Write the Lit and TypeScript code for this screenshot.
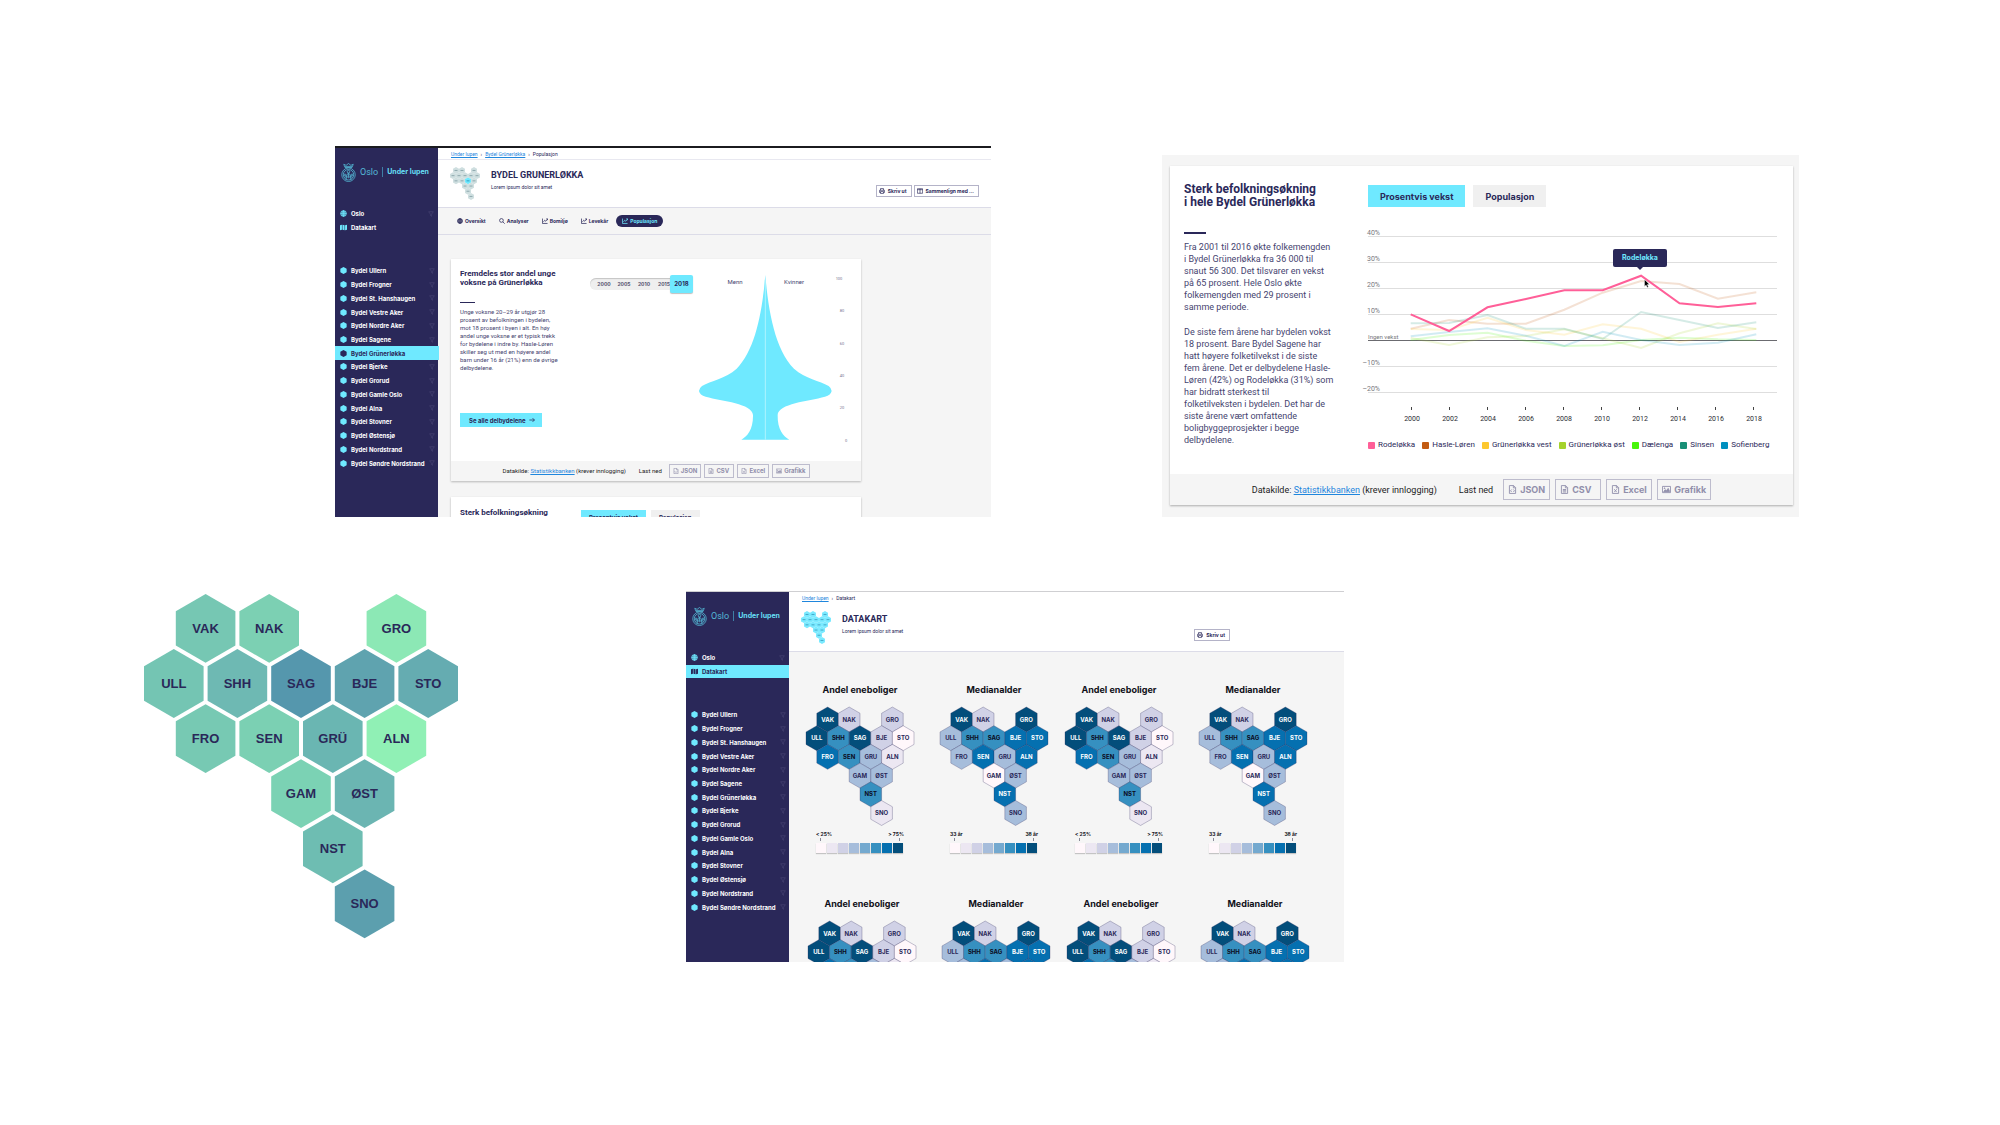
import { LitElement, html, css, svg, nothing } from "lit";
import { customElement, property } from "lit/decorators.js";
import { classMap } from "lit/directives/class-map.js";

/* ---------- shared styles ---------- */

const base = css`
  * {
    box-sizing: border-box;
    margin: 0;
    padding: 0;
  }
  :host {
    display: block;
    color: #2a2859;
    font-family: Roboto, "Liberation Sans", sans-serif;
  }
  button {
    border: 0;
    background: none;
    color: inherit;
    font: inherit;
    cursor: pointer;
    white-space: nowrap;
  }
  ul {
    list-style: none;
  }
  svg {
    display: block;
    flex: none;
  }
  .strong {
    font-family: Inter, "Liberation Sans", sans-serif;
    font-weight: 700;
  }
  .outline {
    display: flex;
    align-items: center;
    gap: 3px;
    height: 12px;
    padding: 0 4px 0 2px;
    border: 1px solid #b4b3c8;
    background: #fff;
    font-size: 5px;
  }
`;

/* ---------- icons ---------- */

const paths = {
  globe: svg`<circle cx="8" cy="8" r="6.6"/><path d="M1.4 8h13.2M8 1.4v13.2M8 1.4c-4.4 4-4.4 9.200 0 13.2M8 1.4c4.400 4 4.400 9.200 0 13.2M2.500 4.500h11M2.500 11.500h11"/>`,
  map: svg`<path fill="currentColor" stroke="none" d="M0 3l4.400-1.500v11.500L0 14.500zM5.600 1.500l4.800 1.500v11.500l-4.800-1.500zM11.600 3L16 1.500v11.500l-4.400 1.500z"/>`,
  search: svg`<circle cx="6.500" cy="6.500" r="5"/><path d="M10.200 10.200l5 5"/>`,
  chart: svg`<path d="M1.200 1.500v13h13.600M4 10l3.200-4 2.800 2.600 5-6M11.500 2.200h3.600v3.600"/>`,
  print: svg`<path d="M4 6V1.500h8V6M4 12H1.500V6h13v6H12M4 9.500h8v5H4z"/>`,
  columns: svg`<path d="M1 2h14v12H1zM8 2v12M1 4.500h14"/>`,
  filter: svg`<path d="M1.500 2h13L9.600 8.200v6L6.400 12V8.200z"/>`,
  arrow: svg`<path d="M1 8h13.500M9.500 3l5 5-5 5"/>`,
  json: svg`<path d="M2.500 1h7.500l3.500 3.500V15h-11zM9.500 1v4h4M6.500 8l-2 2.200 2 2.200M9.500 8l2 2.200-2 2.200"/>`,
  csv: svg`<path d="M2.500 1h7.500l3.500 3.500V15h-11zM9.500 1v4h4M5 8h6M5 10.200h6M5 12.400h6"/>`,
  excel: svg`<path d="M2.500 1h7.500l3.500 3.500V15h-11zM9.500 1v4h4M5.800 7.500l4.400 5.200M10.200 7.500l-4.400 5.200"/>`,
  image: svg`<path d="M.8 2.500h14.400v11H.8z"/><path fill="currentColor" d="M3 11.500l3-3 2 1.500 3-4 2.500 5.500z"/><circle cx="4.600" cy="5.800" r=".8" fill="currentColor"/>`,
  hexagon: svg`<path fill="currentColor" stroke="none" d="M8 0l7.200 3.800v8.400L8 16 .8 12.200V3.800z"/>`,
};
type IconName = keyof typeof paths;

const icon = (name: IconName, size: number, stroke = 1.8) => html`<svg
  width=${size} height=${size} viewBox="0 0 16 16" fill="none" stroke="currentColor"
  stroke-width=${stroke} aria-hidden="true">${paths[name]}</svg>`;

/* ---------- hexagon map ---------- */

const cells: [code: string, column: number, row: number][] = [
  ["VAK", 1, 0], ["NAK", 3, 0], ["GRO", 7, 0],
  ["ULL", 0, 1], ["SHH", 2, 1], ["SAG", 4, 1], ["BJE", 6, 1], ["STO", 8, 1],
  ["FRO", 1, 2], ["SEN", 3, 2], ["GRU", 5, 2], ["ALN", 7, 2],
  ["GAM", 4, 3], ["ØST", 6, 3],
  ["NST", 5, 4],
  ["SNO", 6, 5],
];

type Fill = { fill: string; text: string };

const hexMap = (o: {
  pitch: number;
  width: number;
  fills: Fill[];
  font?: number;
  family?: string;
  stroke?: string;
  labels?: Record<string, string>;
  title: string;
}) => {
  const r = o.width / Math.sqrt(3);
  const rowStep = (o.pitch * Math.sqrt(3)) / 2;
  const w = Math.ceil(o.pitch * 4 + o.width);
  const h = Math.ceil(rowStep * 5 + r * 2);
  return html`<svg width=${w} height=${h} viewBox="0 0 ${w} ${h}" role="img" aria-label=${o.title}>
    ${cells.map(([code, column, row], i) => {
      const x = o.width / 2 + (column * o.pitch) / 2;
      const y = r + row * rowStep;
      const a = o.width / 2;
      const points = [[0, -r], [a, -r / 2], [a, r / 2], [0, r], [-a, r / 2], [-a, -r / 2]]
        .map(([dx, dy]) => `${(x + dx).toFixed(2)},${(y + dy).toFixed(2)}`)
        .join(" ");
      const f = o.fills[i];
      return svg`<polygon points=${points} fill=${f.fill} stroke=${o.stroke ?? "none"} stroke-width="1"/>
        ${o.font
          ? svg`<text x=${x} y=${y + o.font * 0.36} text-anchor="middle" font-family=${o.family} font-weight="700"
              font-size=${o.font} fill=${f.text}>${o.labels?.[code] ?? code}</text>`
          : svg`<path d="M${x - 1.500} ${y}h3" stroke=${f.text} stroke-width="1"/>`}`;
    })}
  </svg>`;
};

const ramp = ["#fff7fb", "#ece7f2", "#d0d1e6", "#a6bddb", "#74a9cf", "#3690c0", "#0570b0", "#034e7b"];
const fromRamp = (steps: number[]): Fill[] =>
  steps.map((s) => ({ fill: ramp[s], text: s > 5 ? "#ffffff" : s === 5 ? "#0b0b20" : "#2a2859" }));

const eneboliger = fromRamp([7, 2, 2, 7, 5, 7, 2, 0, 6, 5, 3, 1, 3, 3, 5, 1]);
const medianalder = fromRamp([7, 2, 7, 3, 5, 5, 6, 6, 3, 6, 3, 6, 0, 3, 6, 3]);
const overview: Fill[] = [
  "#76c7b3", "#7cd0b3", "#8ce8b5", "#74c5b3", "#6eb9b3", "#5597ad", "#5fa3af", "#65acb1",
  "#77c9b3", "#7bd0b3", "#6ab6b2", "#90f0b5", "#7bd2b4", "#6bb5b2", "#6ebdb2", "#5c9fae",
].map((fill) => ({ fill, text: "#2a2859" }));

/* ---------- side navigation ---------- */

const districts = [
  "Ullern", "Frogner", "St. Hanshaugen", "Vestre Aker", "Nordre Aker", "Sagene", "Grünerløkka", "Bjerke",
  "Grorud", "Gamle Oslo", "Alna", "Stovner", "Østensjø", "Nordstrand", "Søndre Nordstrand",
].map((name) => `Bydel ${name}`);

@customElement("side-nav")
class SideNav extends LitElement {
  @property() current = "";

  static styles = [
    base,
    css`
      :host {
        flex: none;
        width: 103px;
        background: #2a2859;
        color: #fff;
      }
      .logo {
        display: flex;
        align-items: center;
        gap: 4px;
        height: 20px;
        margin: 14px 6px 25px;
        color: #54b9d6;
      }
      .city {
        font-size: 9px;
        line-height: 10px;
      }
      .product {
        padding-left: 4px;
        color: #66dff5;
        font-size: 7px;
        line-height: 10px;
        border-left: 1px solid #3f7fa6;
        white-space: nowrap;
      }
      .pages,
      .districts {
        display: grid;
        grid-auto-rows: 1fr;
      }
      .pages {
        height: 27px;
      }
      .districts {
        height: 206px;
        margin-top: 30px;
      }
      li {
        display: flex;
      }
      a {
        flex: 1;
        display: flex;
        align-items: center;
        gap: 4px;
        padding: 0 4px 0 5px;
        color: #fff;
        font-size: 6px;
        text-decoration: none;
        white-space: nowrap;
      }
      a .mark {
        color: #6fe9ff;
      }
      a .funnel {
        margin-left: auto;
        color: #4c4a78;
      }
      a.current {
        background: #6fe9ff;
        color: #2a2859;
      }
      a.current .mark {
        color: #2a2859;
      }
    `,
  ];

  private item(name: string, glyph: IconName, filter = true) {
    const current = name === this.current;
    return html`<li>
      <a href="#" class=${classMap({ strong: true, current })} aria-current=${current ? "page" : nothing}>
        <span class="mark">${icon(glyph, 7, 1.8)}</span>${name}
        ${filter && !current ? html`<span class="funnel">${icon("filter", 6, 1.5)}</span>` : nothing}
      </a>
    </li>`;
  }

  render() {
    return html`
      <div class="logo">
        <svg width="15" height="19" viewBox="0 0 30 38" fill="none" stroke="currentColor" stroke-width="1.600" aria-hidden="true">
          <path d="M8 9L5.500 2.500l4.700 2.200L15 1l4.800 3.700 4.700-2.200L22 9zM8 6.800h14"/>
          <circle cx="15" cy="23.500" r="13.500"/>
          <circle cx="15" cy="23.500" r="10.500"/>
          <circle cx="15" cy="17.500" r="2.600"/>
          <path d="M15 20v9M10 34l2-11 3-2.500 3 2.500 2 11M7 29l4-2.500 4 3 4-3 4 2.500"/>
          <circle cx="8" cy="24" r="2"/>
          <circle cx="22" cy="24" r="2"/>
        </svg>
        <span class="city">Oslo</span>
        <span class="product strong">Under lupen</span>
      </div>
      <nav aria-label="Sider">
        <ul class="pages">${this.item("Oslo", "globe")}${this.item("Datakart", "map", false)}</ul>
        <ul class="districts">${districts.map((d) => this.item(d, "hexagon"))}</ul>
      </nav>
    `;
  }
}

/* ---------- page header ---------- */

@customElement("page-header")
class PageHeader extends LitElement {
  @property() heading = "";
  @property({ attribute: false }) trail: string[] = [];
  @property({ attribute: false }) fills: Fill[] = [];
  @property({ type: Boolean, reflect: true }) compare = false;

  static styles = [
    base,
    css`
      :host {
        background: #fff;
        border-bottom: 1px solid #dcdce8;
      }
      .trail {
        display: flex;
        gap: 3px;
        height: 12px;
        padding-left: 13px;
        font-size: 5px;
        line-height: 12px;
      }
      :host([compare]) .trail {
        border-bottom: 1px solid #e8e8f0;
      }
      .trail a {
        color: #1f86dd;
      }
      .row {
        display: flex;
        gap: 11px;
        height: 47px;
        padding: 7px 12px 0;
      }
      :host(:not([compare])) .row {
        padding-right: 114px;
      }
      .titles {
        flex: 1;
        padding-top: 3px;
      }
      h1 {
        margin-bottom: 4px;
        font-size: 9px;
        line-height: 10px;
      }
      .titles p {
        font-size: 5px;
        line-height: 6px;
      }
      .actions {
        display: flex;
        align-items: flex-start;
        gap: 2px;
        padding-top: 18px;
      }
    `,
  ];

  render() {
    const last = this.trail.length - 1;
    return html`
      <nav class="trail" aria-label="Brødsmuler">
        ${this.trail.map((t, i) => (i === last ? html`<span>${t}</span>` : html`<a href="#">${t}</a><span>›</span>`))}
      </nav>
      <div class="row">
        ${hexMap({ pitch: 6, width: 6, fills: this.fills, title: this.heading })}
        <div class="titles">
          <h1>${this.heading}</h1>
          <p>Lorem ipsum dolor sit amet</p>
        </div>
        <div class="actions">
          <button class="outline strong">${icon("print", 6)}Skriv ut</button>
          ${this.compare
            ? html`<button class="outline strong">${icon("columns", 6)}Sammenlign med ...</button>`
            : nothing}
        </div>
      </div>
    `;
  }
}

/* ---------- source and download bar ---------- */

@customElement("download-bar")
class DownloadBar extends LitElement {
  @property({ type: Boolean, reflect: true }) compact = false;

  static styles = [
    base,
    css`
      :host {
        display: flex;
        align-items: center;
        justify-content: center;
        gap: 22px;
        height: 31px;
        background: #f5f5f5;
        color: #1c1c24;
        font-size: 9px;
        line-height: 12px;
        white-space: nowrap;
      }
      a {
        color: #1f86dd;
      }
      .files {
        display: flex;
        align-items: center;
        gap: 5px;
      }
      .files span {
        margin-right: 5px;
      }
      button {
        display: flex;
        align-items: center;
        gap: 3px;
        min-width: 46px;
        height: 21px;
        padding: 0 4px;
        border: 1px solid #bdbccd;
        color: #918fab;
      }
      :host([compact]) {
        gap: 13px;
        height: 20px;
        font-size: 6px;
        line-height: 8px;
      }
      :host([compact]) .files {
        gap: 3px;
      }
      :host([compact]) .files span {
        margin-right: 4px;
      }
      :host([compact]) button {
        gap: 2px;
        min-width: 30px;
        height: 14px;
        padding: 0 3px;
      }
    `,
  ];

  render() {
    const size = this.compact ? 6 : 9;
    const files: [string, IconName][] = [["JSON", "json"], ["CSV", "csv"], ["Excel", "excel"], ["Grafikk", "image"]];
    return html`
      <p>Datakilde: <a href="#">Statistikkbanken</a> (krever innlogging)</p>
      <div class="files">
        <span>Last ned</span>
        ${files.map(([name, glyph]) => html`<button class="strong">${icon(glyph, size, 1.600)}${name}</button>`)}
      </div>
    `;
  }
}

/* ---------- population card ---------- */

@customElement("population-card")
class PopulationCard extends LitElement {
  static styles = [
    base,
    css`
      :host {
        background: #fff;
        box-shadow: 0 1px 2px rgba(0, 0, 0, 0.25);
      }
      .body {
        display: flex;
        height: 202px;
        padding: 10px 0 0 9px;
      }
      .body svg {
        overflow: visible;
      }
      .text {
        width: 130px;
        flex: none;
      }
      h2 {
        font-size: 8px;
        line-height: 9px;
      }
      h2::after {
        content: "";
        display: block;
        width: 15px;
        height: 1px;
        margin: 15px 0 5px;
        background: #2a2859;
      }
      .text p {
        width: 100px;
        height: 92px;
        margin-right: 30px;
        font-size: 6px;
        line-height: 8px;
        color: #46446f;
      }
      .all {
        display: flex;
        align-items: center;
        gap: 3px;
        height: 14px;
        margin-top: 13px;
        padding: 0 7px 0 9px;
        background: #6fe9ff;
        font-size: 6px;
      }
      .years {
        display: grid;
        flex: none;
        width: 103px;
        height: 18px;
        margin: 6px 27px 0 0;
        font-size: 5px;
        line-height: 18px;
      }
      .years > * {
        grid-area: 1 / 1;
      }
      .years input {
        appearance: none;
        width: 103px;
        height: 18px;
        background: none;
      }
      .years input::-webkit-slider-runnable-track {
        height: 12px;
        border-radius: 6px;
        background: #efefef;
        box-shadow: inset 0 1px 1px #c4c4c4;
      }
      .years input::-webkit-slider-thumb {
        appearance: none;
        width: 23px;
        height: 18px;
        margin-top: -3px;
        border-radius: 2px;
        background: #6fe9ff;
        box-shadow: 0 1px 1px rgba(0, 0, 0, 0.25);
      }
      .stops {
        display: flex;
        width: 80px;
        padding-left: 4px;
        overflow: hidden;
        color: #55536f;
        pointer-events: none;
      }
      .stops span {
        flex: none;
        width: 20px;
        text-align: center;
      }
      output {
        justify-self: end;
        width: 23px;
        font-size: 6px;
        text-align: center;
        pointer-events: none;
      }
    `,
  ];

  render() {
    const half = "M316 405C325 515 346 630 402 686C436 717 480 722 506 738Q515 745 515 753Q513 765 495 770C445 784 355 790 353 825C352 868 370 890 388 899L316 899Z";
    return html`
      <div class="body">
        <div class="text">
          <h2>Fremdeles stor andel unge<br />voksne på Grünerløkka</h2>
          <p>
            Unge voksne 20–29 år utgjør 28 prosent av befolkningen i bydelen, mot 18 prosent i byen i alt. En høy andel
            unge voksne er et typisk trekk for bydelene i indre by. Hasle-Løren skiller seg ut med en høyere andel barn
            under 16 år (21%) enn de øvrige delbydelene.
          </p>
          <button class="all strong">Se alle delbydelene ${icon("arrow", 6, 2)}</button>
        </div>
        <div class="years">
          <input type="range" min="2000" max="2018" value="2018" aria-label="År" />
          <div class="stops strong">${[2000, 2005, 2010, 2015].map((y) => html`<span>${y}</span>`)}</div>
          <output class="strong">2018</output>
        </div>
        <svg width="141" height="185" viewBox="0 0 141 185" role="img" aria-label="Befolkningspyramide">
          <g fill="#6fe9ff" transform="translate(-60 -129) scale(0.3333)">
            <path d=${half} />
            <path d=${half} transform="translate(632 0) scale(-1 1)" />
            <path d="M316 420V899" stroke="#a9f3ff" stroke-width="3" />
          </g>
          <g font-size="6" fill="#46446f" text-anchor="middle">
            <text x="15" y="15">Menn</text>
            <text x="74" y="15">Kvinner</text>
          </g>
          <g font-size="4" fill="#77758f" text-anchor="middle">
            ${[100, 80, 60, 40, 20, 0].map(
              (v, i) => svg`<text x=${v === 100 ? 119 : v ? 122 : 126} y=${11 + i * 32.300}>${v}</text>`
            )}
          </g>
        </svg>
      </div>
      <download-bar compact></download-bar>
    `;
  }
}

/* ---------- growth chart ---------- */

const series: { name: string; color: string; y: number[] }[] = [
  { name: "Hasle-Løren", color: "#c25b12", y: [328.7, 320, 323.7, 323.7, 309.7, 292.7, 281, 284, 298.7, 292.3] },
  { name: "Grünerløkka vest", color: "#fdc82f", y: [329, 330, 317.7, 330, 334.7, 324.3, 328.7, 342, 334.7, 328.7] },
  { name: "Grünerløkka øst", color: "#a5d22c", y: [338, 345, 337.3, 336, 329.3, 338.3, 348, 333.3, 323.3, 329] },
  { name: "Dælenga", color: "#48f50a", y: [340, 335, 332.7, 340.7, 346, 345.3, 340, 337.7, 339.3, 340] },
  { name: "Sinsen", color: "#188f76", y: [323.3, 323, 315, 328.7, 328.7, 339, 312, 320, 328, 322.3] },
  { name: "Sofienberg", color: "#0090bf", y: [336.3, 332, 328.3, 335.7, 346, 331.7, 340, 345, 342.7, 334.3] },
];
const focus = { name: "Rodeløkka", color: "#ff5f98", y: [314.3, 331, 307.3, 299, 290.3, 290.3, 275.7, 303.3, 307, 303.3] };
const levels = ["40%", "30%", "20%", "10%", "Ingen vekst", "–10%", "–20%"];

@customElement("growth-chart")
class GrowthChart extends LitElement {
  static styles = [
    base,
    css`
      .chart {
        position: relative;
        margin-top: 21px;
      }
      .chart svg {
        overflow: visible;
      }
      .tip {
        position: absolute;
        left: 245px;
        top: 21px;
        width: 54px;
        height: 18px;
        border-radius: 2px;
        background: #2a2859;
        color: #6fe9ff;
        font-size: 7px;
        line-height: 18px;
        text-align: center;
      }
      .tip::after {
        content: "";
        position: absolute;
        left: 24px;
        top: 18px;
        border: 3px solid transparent;
        border-top-color: #2a2859;
      }
      .legend {
        display: flex;
        gap: 7px;
        margin-top: 18px;
        font-size: 8px;
        line-height: 10px;
        white-space: nowrap;
      }
      .legend li {
        display: flex;
        align-items: center;
        gap: 3px;
      }
      .swatch {
        width: 7px;
        height: 7px;
        border-radius: 1px;
      }
    `,
  ];

  private line(values: number[]) {
    return values.map((y, i) => `${(42.7 + i * 38.4).toFixed(1)},${(y - 228).toFixed(1)}`).join(" ");
  }

  render() {
    return html`
      <div class="chart">
        <svg width="410" height="194" viewBox="0 0 410 194" role="img" aria-label="Prosentvis vekst 2000–2018">
          ${levels.map((label, i) => {
            const y = 8.500 + i * 26;
            const zero = i === 4;
            return svg`<path d="M0 ${y}H409" stroke=${zero ? "#6b6b70" : "#dedede"}/>
              <text x=${zero ? 0 : 12} y=${y - 2} text-anchor=${zero ? "start" : "end"} font-size=${zero ? 6 : 7} fill="#77777d">${label}</text>`;
          })}
          ${series.map(
            (s) => svg`<polyline points=${this.line(s.y)} fill="none" stroke=${s.color} stroke-width="2" opacity="0.18"/>`
          )}
          <polyline points=${this.line(focus.y)} fill="none" stroke=${focus.color} stroke-width="2" />
          ${Array.from({ length: 10 }, (_, i) => {
            const x = 44 + i * 38;
            return svg`<path d="M${x - 0.500} 179v3" stroke="#444"/>
              <text x=${x} y="192.500" text-anchor="middle" font-size="7" fill="#2b2b33">${2000 + i * 2}</text>`;
          })}
          <path d="M276.500 51.500v7l1.600-1.400 1.100 2.500 1.200-.5-1.100-2.500h2.200z" fill="#000" stroke="#fff" stroke-width=".4" />
        </svg>
        <div class="tip strong" role="tooltip">${focus.name}</div>
      </div>
      <ul class="legend">
        ${[focus, ...series].map(
          (s) => html`<li><span class="swatch" style="background:${s.color}"></span>${s.name}</li>`
        )}
      </ul>
    `;
  }
}

@customElement("growth-card")
class GrowthCard extends LitElement {
  @property({ type: Boolean, reflect: true }) compact = false;

  static styles = [
    base,
    css`
      :host {
        background: #fff;
        box-shadow: 0 1px 2px rgba(0, 0, 0, 0.3);
      }
      .body {
        display: flex;
        min-height: 308px;
        padding: 17px 16px 0 14px;
      }
      .text {
        flex: none;
        width: 184px;
      }
      h2 {
        font-size: 12px;
        line-height: 13px;
      }
      h2::after {
        content: "";
        display: block;
        width: 22px;
        height: 2px;
        margin: 23px 0 7px;
        background: #2a2859;
      }
      .text p {
        margin-bottom: 13px;
        font-size: 9px;
        line-height: 12px;
        color: #46446f;
        white-space: nowrap;
      }
      .figure {
        flex: 1;
        min-width: 0;
      }
      .tabs {
        display: flex;
        gap: 8px;
        padding-top: 2px;
      }
      .tabs button {
        height: 22px;
        padding: 0 12px;
        background: #f0f0f0;
        font-size: 9px;
      }
      .tabs .on {
        background: #6fe9ff;
      }
      :host([compact]) .body {
        padding: 11px 9px 0;
      }
      :host([compact]) .text {
        width: 121px;
      }
      :host([compact]) h2 {
        font-size: 8px;
        line-height: 9px;
      }
      :host([compact]) .tabs {
        gap: 5px;
      }
      :host([compact]) .tabs button {
        height: 15px;
        padding: 0 8px;
        font-size: 6px;
      }
    `,
  ];

  render() {
    return html`
      <div class="body">
        <div class="text">
          <h2>Sterk befolkningsøkning<br />i hele Bydel Grünerløkka</h2>
          ${this.compact
            ? nothing
            : html`<p>
                  Fra 2001 til 2016 økte folkemengden<br />i Bydel Grünerløkka fra 36 000 til<br />snaut 56 300. Det
                  tilsvarer en vekst<br />på 65 prosent. Hele Oslo økte<br />folkemengden med 29 prosent i<br />samme
                  periode.
                </p>
                <p>
                  De siste fem årene har bydelen vokst<br />18 prosent. Bare Bydel Sagene har<br />hatt høyere
                  folketilvekst i de siste<br />fem årene. Det er delbydelene Hasle-<br />Løren (42%) og Rodeløkka (31%)
                  som<br />har bidratt sterkest til<br />folketilveksten i bydelen. Det har de<br />siste årene vært
                  omfattende<br />boligbyggeprosjekter i begge<br />delbydelene.
                </p>`}
        </div>
        <div class="figure">
          <div class="tabs">
            <button class="strong on" aria-pressed="true">Prosentvis vekst</button>
            <button class="strong" aria-pressed="false">Populasjon</button>
          </div>
          ${this.compact ? nothing : html`<growth-chart></growth-chart>`}
        </div>
      </div>
      ${this.compact ? nothing : html`<download-bar></download-bar>`}
    `;
  }
}

/* ---------- small map with legend ---------- */

@customElement("data-map")
class DataMap extends LitElement {
  @property() heading = "";
  @property() low = "";
  @property() high = "";
  @property({ attribute: false }) fills: Fill[] = [];

  static styles = [
    base,
    css`
      :host {
        display: flex;
        flex-direction: column;
        align-items: center;
      }
      h2 {
        margin-bottom: 11px;
        color: #0f0f18;
        font-size: 9px;
        line-height: 12px;
      }
      svg {
        overflow: visible;
      }
      .scale {
        width: 88px;
        margin-top: 5px;
      }
      .ends {
        display: flex;
        justify-content: space-between;
        color: #0f0f18;
        font-size: 5px;
        line-height: 6px;
      }
      .ends span::after {
        content: "";
        display: block;
        width: 1px;
        height: 3px;
        margin: 1px 4px 2px;
        background: #8a8a99;
      }
      .ends span:last-child::after {
        margin-left: auto;
      }
      .steps {
        display: flex;
        gap: 1px;
      }
      .steps li {
        width: 10px;
        height: 10px;
        box-shadow: 0 1px 1px rgba(0, 0, 0, 0.2);
      }
    `,
  ];

  render() {
    return html`
      <h2 class="strong">${this.heading}</h2>
      ${hexMap({
        pitch: 21.6, width: 21.6, fills: this.fills, font: 6, family: "Inter, sans-serif",
        stroke: "rgba(42,40,89,0.28)", title: this.heading,
      })}
      <div class="scale">
        <div class="ends strong"><span>${this.low}</span><span>${this.high}</span></div>
        <ul class="steps">${ramp.map((c) => html`<li style="background:${c}"></li>`)}</ul>
      </div>
    `;
  }
}

/* ---------- root ---------- */

@customElement("app-root")
class AppRoot extends LitElement {
  static styles = [
    base,
    css`
      :host {
        min-height: 100vh;
        background: #fff;
      }
      .line {
        display: grid;
        align-items: start;
      }
      .first {
        grid-template-columns: 335fr 656fr 171fr 637fr 201fr;
        padding-top: 146px;
      }
      .second {
        grid-template-columns: 144fr 316fr 226fr 658fr 656fr;
        padding-top: 74px;
      }
      .line > * {
        min-width: 0;
      }
      .frame {
        display: flex;
        grid-column: 2;
        aspect-ratio: 656 / 371;
        overflow: hidden;
        background: #f5f5f5;
        border-top: 2px solid #1b1b1f;
      }
      .second .frame {
        grid-column: 4;
        aspect-ratio: 658 / 371;
        border-top: 1px solid #cfcfd2;
      }
      .main {
        flex: 1;
        min-width: 0;
        overflow: hidden;
      }
      .tabs {
        display: flex;
        align-items: center;
        gap: 3px;
        height: 27px;
        padding-left: 14px;
        border-bottom: 1px solid #dcdce8;
      }
      .tabs a {
        display: flex;
        align-items: center;
        gap: 2px;
        height: 12px;
        padding: 0 5px;
        border-radius: 6px;
        color: inherit;
        font-size: 5px;
        text-decoration: none;
      }
      .tabs .on {
        padding: 0 6px;
        background: #2a2859;
        color: #6fe9ff;
      }
      .cards {
        display: grid;
        gap: 16px;
        max-width: 423px;
        padding: 24px 0 0 13px;
      }
      .zoomed {
        grid-column: 4;
        margin-top: 9px;
        padding: 11px 6px 12px 8px;
        background: #f5f5f5;
      }
      .overview {
        grid-column: 2;
        margin-top: 3px;
      }
      .maps {
        display: flex;
        gap: 17px;
        padding: 32px 0 0 17px;
      }
      .maps.lower {
        padding: 45px 0 0 19px;
      }
      .pair {
        display: flex;
        gap: 26px;
      }
    `,
  ];

  private maps(lower = false) {
    return html`<div class=${classMap({ maps: true, lower })}>
      ${[0, 1].map(
        () => html`<div class="pair">
          <data-map heading="Andel eneboliger" low="< 25%" high="> 75%" .fills=${eneboliger}></data-map>
          <data-map heading="Medianalder" low="33 år" high="38 år" .fills=${medianalder}></data-map>
        </div>`
      )}
    </div>`;
  }

  render() {
    const dimmed = cells.map(([code]) =>
      code === "GRU" ? { fill: "#6fe9ff", text: "#2f9fc0" } : { fill: "#cfdfe0", text: "#8fa9ae" }
    );
    const bright = cells.map(() => ({ fill: "#7beaff", text: "#45a9c8" }));
    const tabs: [string, IconName][] = [
      ["Oversikt", "globe"], ["Analyser", "search"], ["Bomiljø", "chart"], ["Levekår", "chart"], ["Populasjon", "chart"],
    ];
    return html`
      <div class="line first">
        <section class="frame">
          <side-nav current="Bydel Grünerløkka"></side-nav>
          <div class="main">
            <page-header
              compare
              heading="BYDEL GRUNERLØKKA"
              .trail=${["Under lupen", "Bydel Grünerløkka", "Populasjon"]}
              .fills=${dimmed}
            ></page-header>
            <nav class="tabs" aria-label="Tema">
              ${tabs.map(
                ([name, glyph]) => html`<a href="#" class=${classMap({ strong: true, on: name === "Populasjon" })}>
                  ${icon(glyph, 6, 2)}${name}</a>`
              )}
            </nav>
            <div class="cards">
              <population-card></population-card>
              <growth-card compact></growth-card>
            </div>
          </div>
        </section>
        <section class="zoomed"><growth-card></growth-card></section>
      </div>
      <div class="line second">
        <section class="overview">
          ${hexMap({
            pitch: 63.6, width: 59.6, fills: overview, font: 13,
            family: "'Liberation Sans', Arial, sans-serif", labels: { GRU: "GRÜ" }, title: "Bydeler i Oslo",
          })}
        </section>
        <section class="frame">
          <side-nav current="Datakart"></side-nav>
          <div class="main">
            <page-header heading="DATAKART" .trail=${["Under lupen", "Datakart"]} .fills=${bright}></page-header>
            ${this.maps()}${this.maps(true)}
          </div>
        </section>
      </div>
    `;
  }
}
